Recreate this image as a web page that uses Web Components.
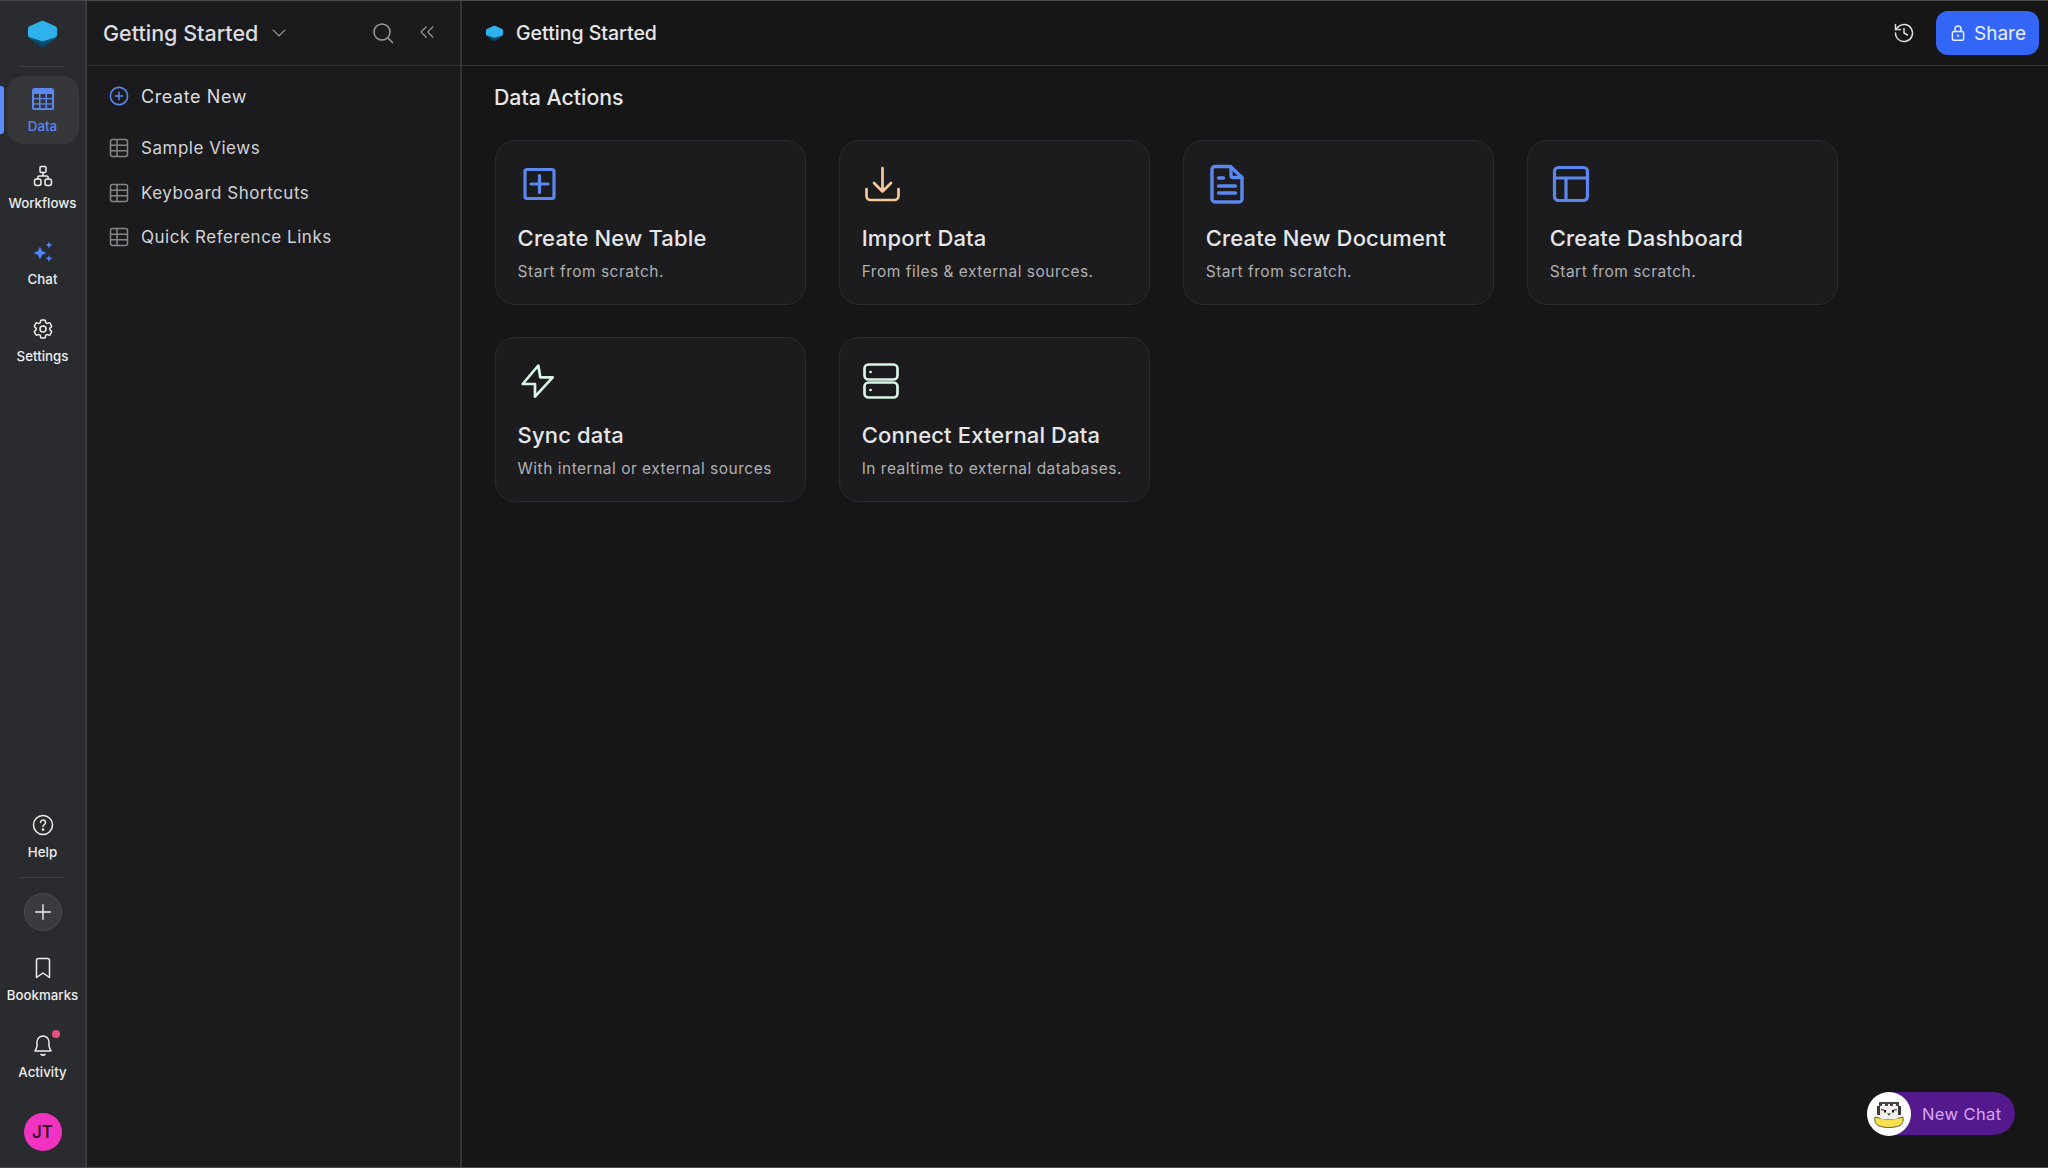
<!DOCTYPE html>
<html lang="en">
<head>
<meta charset="utf-8">
<title>Getting Started</title>
<style>
  html, body { margin: 0; height: 100%; background: #161617; }
  body { font-family: Inter, "Noto Sans", sans-serif; overflow: hidden; }
</style>
</head>
<body>
<app-shell></app-shell>
<script>
const BLUE = '#5b87ee';

// 24 grid icons shared by the rail and the panel
const icon = (size, body, extra = '') =>
  `<svg width="${size}" height="${size}" viewBox="0 0 24 24" fill="none" stroke="currentColor" stroke-width="1.5" stroke-linecap="round" stroke-linejoin="round" ${extra}>${body}</svg>`;

const logo = (w, h) => `<svg width="${w}" height="${h}" viewBox="0 0 29 28">
  <defs><linearGradient id="lg" x1="0" y1="0" x2="0" y2="1"><stop offset="0" stop-color="#0d6ea6"/><stop offset="1" stop-color="#0a3f5e"/></linearGradient></defs>
  <path d="M14.5 7 28 14v3.5L14.5 27.5 1 17.500V14Z" fill="url(#lg)" stroke="url(#lg)" stroke-linejoin="round"/>
  <path d="M13.300.9a3 3 0 0 1 2.400 0l11.800 5.400A2.500 2.500 0 0 1 29 8.600v6.300a2.500 2.500 0 0 1-1.500 2.300l-11.800 3.700a4 4 0 0 1-2.400 0L1.500 17.200A2.500 2.500 0 0 1 0 14.900V8.600a2.500 2.500 0 0 1 1.500-2.300Z" fill="#2fb1ec"/>
</svg>`;

const tableIcon = `<svg width="20" height="20" viewBox="0 0 20 20" fill="none" stroke="#85868a" stroke-width="1.5"><rect x="1.500" y="1.500" width="17" height="17" rx="2"/><path d="M1.500 7.200h17M1.500 12.800h17M8 1.500v17"/></svg>`;

const railIcons = {
  data: `<svg width="24" height="24" viewBox="0 0 24 24"><rect x="1" y="1" width="22" height="22" rx="2.500" fill="${BLUE}"/><g fill="#34353a"><rect x="3" y="7" width="5" height="4"/><rect x="9.500" y="7" width="5" height="4"/><rect x="16" y="7" width="5" height="4"/><rect x="3" y="12.300" width="5" height="4"/><rect x="9.500" y="12.300" width="5" height="4"/><rect x="16" y="12.300" width="5" height="4"/><rect x="3" y="17.600" width="5" height="3.500"/><rect x="9.500" y="17.600" width="5" height="3.500"/><rect x="16" y="17.600" width="5" height="3.500"/></g></svg>`,
  workflows: icon(24, `<rect x="9" y="2.500" width="6" height="6" rx="1.200"/><rect x="3.500" y="15" width="6.500" height="6.500" rx="2.200"/><rect x="14" y="15" width="6.500" height="6.500" rx="2.200"/><path d="M12 8.500V12M6.800 15v-1.500a1.500 1.500 0 0 1 1.500-1.500h7.400a1.500 1.500 0 0 1 1.500 1.500V15"/>`),
  chat: `<svg width="24" height="24" viewBox="0 0 24 24" fill="#4f86f7"><path d="M9 6.500 11 11l4.500 2L11 15l-2 4.500L7 15l-4.500-2L7 11Z"/><path d="M18 1.500l1 2.500 2.500 1-2.500 1-1 2.500-1-2.500-2.500-1 2.500-1Z"/><path d="M18 15l1 2.500 2.500 1-2.500 1-1 2.500-1-2.500-2.500-1 2.500-1Z"/></svg>`,
  settings: icon(24, `<path d="M9.594 3.940c.090-.542.560-.940 1.110-.940h2.593c.550 0 1.020.398 1.110.940l.213 1.281c.063.374.313.686.645.870.074.040.147.083.220.127.325.196.720.257 1.075.124l1.217-.456a1.125 1.125 0 0 1 1.370.490l1.296 2.247a1.125 1.125 0 0 1-.260 1.431l-1.003.827c-.293.241-.438.613-.430.992a7.723 7.723 0 0 1 0 .255c-.008.378.137.750.430.991l1.004.827c.424.350.534.955.260 1.430l-1.298 2.247a1.125 1.125 0 0 1-1.369.491l-1.217-.456c-.355-.133-.750-.072-1.076.124a6.470 6.470 0 0 1-.220.128c-.331.183-.581.495-.644.869l-.213 1.281c-.090.543-.560.940-1.110.940h-2.594c-.550 0-1.019-.398-1.110-.940l-.213-1.281c-.062-.374-.312-.686-.644-.870a6.520 6.520 0 0 1-.220-.127c-.325-.196-.720-.257-1.076-.124l-1.217.456a1.125 1.125 0 0 1-1.369-.490l-1.297-2.247a1.125 1.125 0 0 1 .260-1.431l1.004-.827c.292-.240.437-.613.430-.991a6.932 6.932 0 0 1 0-.255c.007-.380-.138-.751-.430-.992l-1.004-.827a1.125 1.125 0 0 1-.260-1.430l1.297-2.247a1.125 1.125 0 0 1 1.370-.491l1.216.456c.356.133.751.072 1.076-.124.072-.044.146-.086.220-.128.332-.183.582-.495.644-.869l.214-1.280Z"/><circle cx="12" cy="12" r="3"/>`),
  help: icon(24, `<circle cx="12" cy="12" r="9.500"/><path d="M9.500 9.400a2.500 2.500 0 1 1 3.900 2.100c-.9.600-1.400 1-1.400 2"/><circle cx="12" cy="16.600" r=".6" fill="currentColor"/>`),
  bookmark: icon(24, `<path d="M5.500 4.500a2 2 0 0 1 2-2h9a2 2 0 0 1 2 2v17l-6.500-4.500L5.500 21.500Z"/>`),
  bell: icon(24, `<path d="M12 3a6 6 0 0 0-6 6v3.500c0 2-1 3.800-2 5.500h16c-1-1.700-2-3.500-2-5.500V9a6 6 0 0 0-6-6Z"/><path d="M10 21.500c1.300.8 2.700.8 4 0"/>`)
};

const cardIcons = {
  plus: `<svg width="44" height="44" viewBox="0 0 44 44" fill="none" stroke="${BLUE}" stroke-width="3.200"><rect x="7" y="7.500" width="29" height="29" rx="2"/><path d="M21.500 13.500v17M13 22h17" stroke-linecap="round"/></svg>`,
  import: `<svg width="44" height="44" viewBox="0 0 44 44" fill="none" stroke="#f5c99b" stroke-width="2.700" stroke-linecap="round" stroke-linejoin="round"><path d="M20.500 6v23.500M12 21l8.500 8.500L29 21"/><path d="M4.500 27v7a4 4 0 0 0 4 4h24a4 4 0 0 0 4-4v-7"/></svg>`,
  sync: `<svg width="44" height="44" viewBox="0 0 44 44" fill="none" stroke="#d8f5e6" stroke-width="2.700" stroke-linejoin="round"><path d="M20.300 6.500 4.700 25H17v12.700L34.700 18.300H22.300Z"/></svg>`,
  server: `<svg width="44" height="44" viewBox="0 0 44 44" fill="none" stroke="#d8f5e6" stroke-width="2.700" stroke-linecap="round"><rect x="2.500" y="5.500" width="33" height="15" rx="4"/><rect x="2.500" y="23.500" width="33" height="15" rx="4"/><path d="M8.500 13h.1M8.500 31h.1"/></svg>`,
  doc: `<svg width="44" height="44" viewBox="0 0 44 44" fill="none" stroke="${BLUE}" stroke-width="3.400" stroke-linecap="round" stroke-linejoin="round"><g transform="translate(-1 0)"><path d="M10 4.500h15.500L37 15.500V37a3 3 0 0 1-3 3H10a3 3 0 0 1-3-3V7.500a3 3 0 0 1 3-3Z"/><path d="M26 5v8.500a2 2 0 0 0 2 2h9"/><path d="M13.500 16h5M13.500 24h17M13.500 31h17"/></g></svg>`,
  dash: `<svg width="44" height="44" viewBox="0 0 44 44" fill="none" stroke="${BLUE}" stroke-width="3.200" stroke-linejoin="round"><rect x="4.500" y="5.500" width="33" height="33" rx="4"/><path d="M4.500 16h33M16 16v22.500"/></svg>`
};

// tiny tiger drawn with shapes, the bot picture of the chat pill
const tiger = `<svg width="44" height="44" viewBox="0 0 44 44">
  <circle cx="22" cy="22" r="22" fill="#fff"/>
  <path d="M8 25c4 1 8 2 14 2s10-1 14-2c1 4-1 8-4 9-4 1-6 1.500-10 1.500S16 35 12 34c-3-1-5-5-4-9Z" fill="#f7e04b" stroke="#20201c" stroke-width=".7"/>
  <rect x="12" y="10" width="20" height="17" rx="4" fill="#f2f1ee"/>
  <path d="M12 10h20v4h-3v-2h-3v2h-3v-2h-2v2h-3v-2h-3v2h-3Z" fill="#454545"/>
  <path d="M10 14h3v9h-3ZM31 14h3v9h-3Z" fill="#3a3a3a"/>
  <path d="M14 17h3v1.500h-3ZM27 17h3v1.500h-3Z" fill="#666"/>
  <rect x="17" y="18" width="2" height="2.500" fill="#111"/><rect x="25" y="18" width="2" height="2.500" fill="#111"/>
  <path d="M20 21.500h4l-2 2Z" fill="#222"/>
</svg>`;

class RailItem extends HTMLElement {
  connectedCallback() {
    const active = this.hasAttribute('active');
    this.attachShadow({ mode: 'open' });
    this.shadowRoot.innerHTML = `
      <style>
        :host { display: block; }
        .item {
          position: relative;
          height: 68px;
          width: 72px;
          margin-left: 7px;
          box-sizing: border-box;
          padding-top: 11px;
          border-radius: 16px;
          display: flex;
          flex-direction: column;
          align-items: center;
          gap: 7px;
          color: #eeeeef;
          font-size: 13.300px;
          font-weight: 500;
          line-height: 16px;
          white-space: nowrap;
        }
        .icon { height: 24px; display: flex; }
        .active { background: #36373b; color: ${BLUE}; }
        .active::before {
          content: '';
          position: absolute;
          left: -7px;
          top: 10px;
          width: 4px;
          height: 48px;
          border-radius: 0 3px 3px 0;
          background: #5b8cff;
        }
        .dot {
          position: absolute;
          left: 45px;
          top: 8px;
          width: 8px;
          height: 8px;
          border-radius: 50%;
          background: #e8517f;
        }
      </style>
      <div class="item ${active ? 'active' : ''}">
        <div class="icon"><slot></slot></div>
        <span>${this.getAttribute('label')}</span>
        ${this.hasAttribute('dot') ? '<i class="dot"></i>' : ''}
      </div>`;
  }
}

class AppRail extends HTMLElement {
  connectedCallback() {
    this.attachShadow({ mode: 'open' });
    this.shadowRoot.innerHTML = `
      <style>
        :host {
          display: flex;
          flex-direction: column;
          flex: none;
          width: 85px;
          background: #2a2b2e;
          border-right: 2px solid #3a3b3e;
        }
        rail-item { margin-left: -.5px; }
        .logo { height: 65px; box-sizing: border-box; padding-top: 19px; text-align: center; }
        .sep { height: 1px; background: #3f4043; margin: 0 21px; }
        .top { display: flex; flex-direction: column; gap: 8.5px; padding-top: 9px; }
        .bottom { margin-top: auto; display: flex; flex-direction: column; padding-bottom: 16px; }
        .add {
          width: 36px;
          height: 36px;
          margin: 15px auto 14px;
          border: 1px solid #4b4c50;
          border-radius: 50%;
          background: #3a3b3f;
          color: #eeeeef;
          display: flex;
          align-items: center;
          justify-content: center;
        }
        .avatar {
          width: 38px;
          height: 38px;
          margin: 23px auto 0;
          border-radius: 50%;
          background: #f033c0;
          color: #1d0a1a;
          font-size: 17px;
          font-weight: 500;
          display: flex;
          align-items: center;
          justify-content: center;
        }
      </style>
      <div class="logo">${logo(29, 28)}</div>
      <div class="sep"></div>
      <div class="top">
        <rail-item label="Data" active>${railIcons.data}</rail-item>
        <rail-item label="Workflows">${railIcons.workflows}</rail-item>
        <rail-item label="Chat">${railIcons.chat}</rail-item>
        <rail-item label="Settings">${railIcons.settings}</rail-item>
      </div>
      <div class="bottom">
        <rail-item label="Help">${railIcons.help}</rail-item>
        <div class="sep" style="margin-top:7px"></div>
        <div class="add">${icon(22, '<path d="M12 4v16M4 12h16"/>')}</div>
        <rail-item label="Bookmarks">${railIcons.bookmark}</rail-item>
        <div style="height:9px"></div>
        <rail-item label="Activity" dot>${railIcons.bell}</rail-item>
        <div class="avatar">JT</div>
      </div>`;
  }
}

class SideLink extends HTMLElement {
  connectedCallback() {
    this.attachShadow({ mode: 'open' });
    this.shadowRoot.innerHTML = `
      <style>
        :host {
          display: flex;
          align-items: center;
          gap: 12px;
          padding-left: 22px;
          height: 44.500px;
          color: #d2d3d6;
          font-size: 17px;
          letter-spacing: .52px;
        }
        .icon { display: flex; width: 20px; justify-content: center; }
      </style>
      <div class="icon"><slot></slot></div>
      <span>${this.getAttribute('label')}</span>`;
  }
}

class SidePanel extends HTMLElement {
  connectedCallback() {
    this.attachShadow({ mode: 'open' });
    this.shadowRoot.innerHTML = `
      <style>
        :host {
          display: flex;
          flex-direction: column;
          flex: none;
          width: 373px;
          background: #1b1b1e;
          border-right: 2px solid #333437;
        }
        header {
          height: 64px;
          flex: none;
          display: flex;
          align-items: center;
          padding-left: 16px;
          border-bottom: 1px solid #333437;
          color: #9a9b9f;
        }
        h1 { margin: 0; font-size: 21.500px; font-weight: 500; color: #dcdde0; }
        .chev { margin-left: 11px; display: flex; }
        .search { margin-left: auto; display: flex; }
        .collapse { margin: -3px 24px 0 23px; display: flex; }
        nav { padding-top: 8px; }
      </style>
      <header>
        <h1>Getting Started</h1>
        <span class="chev">${icon(20, '<path d="M5 8.500l7 7 7-7"/>')}</span>
        <span class="search">${icon(24, '<circle cx="11" cy="11" r="8"/><path d="M17 17l4.500 4.500"/>')}</span>
        <span class="collapse">${icon(18, '<path d="M11 5l-7 7 7 7M20 5l-7 7 7 7"/>')}</span>
      </header>
      <nav>
        <side-link label="Create New" style="height:44px;margin-bottom:8px;font-size:18px;letter-spacing:.6px;color:#dcdde0">
          <svg width="22" height="22" viewBox="0 0 22 22" fill="none" stroke="${BLUE}" stroke-width="1.700" stroke-linecap="round"><circle cx="11" cy="11" r="9.500"/><path d="M11 7v8M7 11h8"/></svg>
        </side-link>
        <side-link label="Sample Views">${tableIcon}</side-link>
        <side-link label="Keyboard Shortcuts">${tableIcon}</side-link>
        <side-link label="Quick Reference Links">${tableIcon}</side-link>
      </nav>`;
  }
}

class ActionCard extends HTMLElement {
  connectedCallback() {
    this.attachShadow({ mode: 'open' });
    this.shadowRoot.innerHTML = `
      <style>
        :host {
          display: block;
          box-sizing: border-box;
          height: 165px;
          padding: 21px 22px 0;
          background: #1c1c1f;
          border: 1px solid #2a2b2e;
          border-radius: 20px;
        }
        .icon { height: 44px; display: flex; }
        h3 {
          margin: 19px 0 0;
          font-size: 22px;
          line-height: 26px;
          font-weight: 500;
          color: #e6e7e9;
          letter-spacing: .15px;
        }
        p {
          margin: 11px 0 0;
          font-size: 15.500px;
          line-height: 20px;
          color: #afb0b4;
          letter-spacing: .5px;
        }
      </style>
      <div class="icon"><slot></slot></div>
      <h3>${this.getAttribute('title')}</h3>
      <p>${this.getAttribute('text')}</p>`;
    this.removeAttribute('title');
  }
}

class MainHeader extends HTMLElement {
  connectedCallback() {
    this.attachShadow({ mode: 'open' });
    this.shadowRoot.innerHTML = `
      <style>
        :host {
          display: flex;
          align-items: center;
          height: 64px;
          flex: none;
          padding: 0 9px 0 24px;
          border-bottom: 1px solid #333437;
        }
        .crumb { font-size: 19.500px; font-weight: 500; color: #e6e7e9; margin-left: 13px; }
        .logo { display: flex; }
        .history { margin-left: auto; display: flex; color: #dcdde0; }
        button {
          margin-left: 20px;
          width: 103px;
          height: 44px;
          border: 0;
          border-radius: 12px;
          background: #3366f6;
          color: #e9efff;
          font: inherit;
          font-size: 19px;
          font-weight: 400;
          display: flex;
          align-items: center;
          justify-content: center;
          gap: 7px;
          padding: 0;
        }
      </style>
      <span class="logo">${logo(17, 17)}</span>
      <span class="crumb">Getting Started</span>
      <span class="history">${icon(24, '<path d="M3.500 12a8.500 8.500 0 1 0 2.600-6.100L3.500 8.500"/><path d="M3.500 3.500v5h5"/><path d="M12 7.500V12l3.500 2"/>')}</span>
      <button>${icon(18, '<rect x="4.500" y="10" width="15" height="11.500" rx="2"/><path d="M8 10V6.500a4 4 0 0 1 8 0V10"/><circle cx="12" cy="15.500" r=".6" fill="currentColor"/>', 'style="stroke-width:2"')}Share</button>`;
  }
}

class NewChat extends HTMLElement {
  connectedCallback() {
    this.attachShadow({ mode: 'open' });
    this.shadowRoot.innerHTML = `
      <style>
        :host {
          position: absolute;
          left: 1867px;
          top: 1092px;
          display: flex;
          align-items: center;
          height: 43px;
          width: 148px;
          border-radius: 22px;
          background: #54198c;
          color: #d9a6f5;
          font-size: 16.500px;
          letter-spacing: .4px;
        }
        .pic { display: flex; margin-right: 11px; }
      </style>
      <span class="pic">${tiger}</span>
      <span>New Chat</span>`;
  }
}

class AppShell extends HTMLElement {
  connectedCallback() {
    this.attachShadow({ mode: 'open' });
    this.shadowRoot.innerHTML = `
      <style>
        :host {
          display: flex;
          box-sizing: border-box;
          height: 1168px;
          border-top: 1px solid #4a4a4c;
          border-bottom: 1px solid #4a4a4c;
          background: #161617;
        }
        main { flex: 1; min-width: 0; display: flex; flex-direction: column; }
        h2 {
          margin: 19px 0 0 32px;
          font-size: 21.300px;
          line-height: 24px;
          font-weight: 500;
          color: #e6e7e9;
        }
        .grid {
          display: grid;
          grid-template-columns: repeat(4, 311.200px);
          gap: 32px 32.900px;
          margin: 31px 0 0 32.600px;
        }
      </style>
      <app-rail></app-rail>
      <side-panel></side-panel>
      <main>
        <main-header></main-header>
        <h2>Data Actions</h2>
        <div class="grid">
          <action-card title="Create New Table" text="Start from scratch.">${cardIcons.plus}</action-card>
          <action-card title="Import Data" text="From files &amp; external sources.">${cardIcons.import}</action-card>
          <action-card title="Create New Document" text="Start from scratch.">${cardIcons.doc}</action-card>
          <action-card title="Create Dashboard" text="Start from scratch.">${cardIcons.dash}</action-card>
          <action-card title="Sync data" text="With internal or external sources">${cardIcons.sync}</action-card>
          <action-card title="Connect External Data" text="In realtime to external databases.">${cardIcons.server}</action-card>
        </div>
      </main>
      <new-chat></new-chat>`;
  }
}

customElements.define('rail-item', RailItem);
customElements.define('app-rail', AppRail);
customElements.define('side-link', SideLink);
customElements.define('side-panel', SidePanel);
customElements.define('action-card', ActionCard);
customElements.define('main-header', MainHeader);
customElements.define('new-chat', NewChat);
customElements.define('app-shell', AppShell);
</script>
</body>
</html>
